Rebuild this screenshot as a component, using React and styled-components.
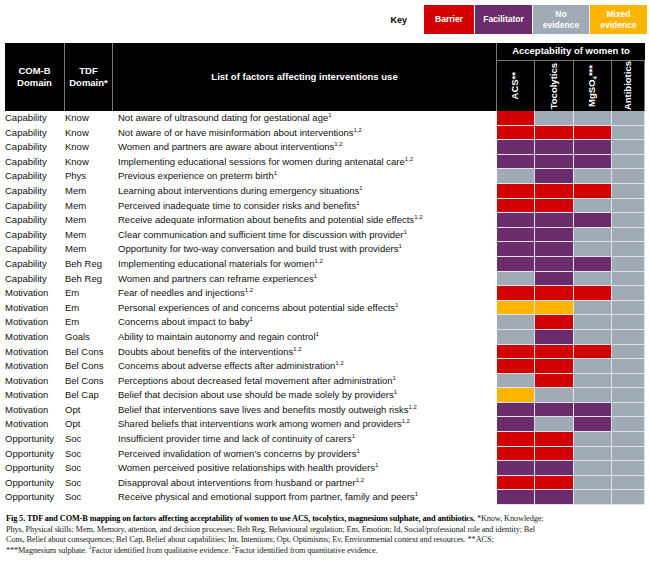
import React from 'react';
import styled, { createGlobalStyle } from 'styled-components';

const Global = createGlobalStyle`
  body { margin: 0; background: #fff; font-family: "Liberation Sans", Arial, sans-serif; }
`;

const C = { R: '#d20000', P: '#6a2c6a', G: '#a1abb6', Y: '#ffb400' };

const rows = [
  ['Capability', 'Know', 'Not aware of ultrasound dating for gestational age', '1', 'RGG'],
  ['Capability', 'Know', 'Not aware of or have misinformation about interventions', '1,2', 'RRR'],
  ['Capability', 'Know', 'Women and partners are aware about interventions', '1,2', 'PPP'],
  ['Capability', 'Know', 'Implementing educational sessions for women during antenatal care', '1,2', 'PPP'],
  ['Capability', 'Phys', 'Previous experience on preterm birth', '1', 'GPG'],
  ['Capability', 'Mem', 'Learning about interventions during emergency situations', '1', 'RRR'],
  ['Capability', 'Mem', 'Perceived inadequate time to consider risks and benefits', '1', 'RRG'],
  ['Capability', 'Mem', 'Receive adequate information about benefits and potential side effects', '1,2', 'PPP'],
  ['Capability', 'Mem', 'Clear communication and sufficient time for discussion with provider', '1', 'PPG'],
  ['Capability', 'Mem', 'Opportunity for two-way conversation and build trust with providers', '1', 'PPG'],
  ['Capability', 'Beh Reg', 'Implementing educational materials for women', '1,2', 'PPP'],
  ['Capability', 'Beh Reg', 'Women and partners can reframe experiences', '1', 'GPG'],
  ['Motivation', 'Em', 'Fear of needles and injections', '1,2', 'RRR'],
  ['Motivation', 'Em', 'Personal experiences of and concerns about potential side effects', '1', 'YYG'],
  ['Motivation', 'Em', 'Concerns about impact to baby', '1', 'GRG'],
  ['Motivation', 'Goals', 'Ability to maintain autonomy and regain control', '1', 'GPG'],
  ['Motivation', 'Bel Cons', 'Doubts about benefits of the interventions', '1,2', 'RRR'],
  ['Motivation', 'Bel Cons', 'Concerns about adverse effects after administration', '1,2', 'RRG'],
  ['Motivation', 'Bel Cons', 'Perceptions about decreased fetal movement after administration', '1', 'GRG'],
  ['Motivation', 'Bel Cap', 'Belief that decision about use should be made solely by providers', '1', 'YGG'],
  ['Motivation', 'Opt', 'Belief that interventions save lives and benefits mostly outweigh risks', '1,2', 'PPP'],
  ['Motivation', 'Opt', 'Shared beliefs that interventions work among women and providers', '1,2', 'PGP'],
  ['Opportunity', 'Soc', 'Insufficient provider time and lack of continuity of carers', '1', 'RRG'],
  ['Opportunity', 'Soc', 'Perceived invalidation of women\u2019s concerns by providers', '1', 'RRG'],
  ['Opportunity', 'Soc', 'Women perceived positive relationships with health providers', '1', 'PPG'],
  ['Opportunity', 'Soc', 'Disapproval about interventions from husband or partner', '1,2', 'RRG'],
  ['Opportunity', 'Soc', 'Receive physical and emotional support from partner, family and peers', '1', 'PPG'],
];

const Page = styled.div`
  width: 649px;
  height: 566px;
  overflow: hidden;
  padding: 5px 1px 0 5px;
  box-sizing: border-box;
`;

const KeyBar = styled.div`
  display: flex;
  justify-content: flex-end;
  align-items: center;
  height: 29px;
  margin-bottom: 9px;
`;

const KeyLabel = styled.div`
  font-size: 9px;
  font-weight: bold;
  margin-right: 17px;
`;

const KeyBox = styled.div`
  width: ${p => p.w}px;
  height: 29px;
  background: ${p => p.bg};
  color: #fff;
  font-size: 8.5px;
  font-weight: bold;
  display: flex;
  align-items: center;
  justify-content: center;
  text-align: center;
  line-height: 1.25;
  border-right: 1px solid #fff;
`;

const Grid = styled.div`
  display: grid;
  grid-template-columns: 60px 48px 384px 38px 39px 38px 33px;
  width: 640px;
`;

const Head = styled.div`
  background: #000;
  color: #fff;
  font-weight: bold;
  font-size: 9.5px;
  display: flex;
  align-items: center;
  justify-content: center;
  text-align: center;
  line-height: 1.3;
  border-right: 1px solid #777;
  grid-row: ${p => p.span ? '1 / span 2' : 'auto'};
`;

const AccHead = styled(Head)`
  grid-column: 4 / span 4;
  height: 17px;
  border-bottom: 1px solid #777;
  border-right: none;
`;

const RotHead = styled(Head)`
  height: 50px;
  span {
    writing-mode: vertical-rl;
    transform: rotate(180deg);
  }
`;

const Cell = styled.div`
  font-size: 9.5px;
  height: 14.6px;
  line-height: 14.6px;
  white-space: nowrap;
  padding-left: ${p => p.pad || 0}px;
  color: #111;
  sup { font-size: 6px; line-height: 0; }
`;

const Swatch = styled.div`
  height: 14.6px;
  box-sizing: border-box;
  background: ${p => p.bg};
  border-right: 1px solid #dfe3ea;
  border-bottom: 1px solid #dfe3ea;
`;

const Caption = styled.div`
  font-family: "Liberation Serif", "Times New Roman", serif;
  font-size: 8.3px;
  line-height: 10.5px;
  letter-spacing: -0.12px;
  margin: 9px 0 0 1px;
  color: #222;
  b { color: #000; }
  sup { font-size: 5.5px; line-height: 0; }
`;

const CapLine = styled.div`
  white-space: nowrap;
`;

export default function App() {
  return (
    <Page>
      <Global />
      <KeyBar>
        <KeyLabel>Key</KeyLabel>
        <KeyBox w={50} bg={C.R}>Barrier</KeyBox>
        <KeyBox w={57} bg={C.P}>Facilitator</KeyBox>
        <KeyBox w={56} bg={C.G}>No<br />evidence</KeyBox>
        <KeyBox w={57} bg={C.Y}>Mixed<br />evidence</KeyBox>
      </KeyBar>
      <Grid>
        <Head span>COM-B<br />Domain</Head>
        <Head span>TDF<br />Domain*</Head>
        <Head span>List of factors affecting interventions use</Head>
        <AccHead>Acceptability of women to</AccHead>
        <RotHead><span>ACS**</span></RotHead>
        <RotHead><span>Tocolytics</span></RotHead>
        <RotHead><span>MgSO<sub style={{ fontSize: 6 }}>4</sub>***</span></RotHead>
        <RotHead><span>Antibiotics</span></RotHead>
        {rows.map((r, i) => (
          <React.Fragment key={i}>
            <Cell>{r[0]}</Cell>
            <Cell>{r[1]}</Cell>
            <Cell pad={5}>{r[2]}<sup>{r[3]}</sup></Cell>
            {(r[4] + 'G').split('').map((c, j) => <Swatch key={j} bg={C[c]} />)}
          </React.Fragment>
        ))}
      </Grid>
      <Caption>
        <CapLine><b>Fig 5. TDF and COM-B mapping on factors affecting acceptability of women to use ACS, tocolytics, magnesium sulphate, and antibiotics.</b> *Know, Knowledge;</CapLine>
        <CapLine>Phys, Physical skills; Mem, Memory, attention, and decision processes; Beh Reg, Behavioural regulation; Em, Emotion; Id, Social/professional role and identity; Bel</CapLine>
        <CapLine>Cons, Belief about consequences; Bel Cap, Belief about capabilities; Int, Intentions; Opt, Optimisms; Ev, Environmental context and resources. **ACS;</CapLine>
        <CapLine>***Magnesium sulphate. <sup>1</sup>Factor identified from qualitative evidence. <sup>2</sup>Factor identified from quantitative evidence.</CapLine>
      </Caption>
    </Page>
  );
}
